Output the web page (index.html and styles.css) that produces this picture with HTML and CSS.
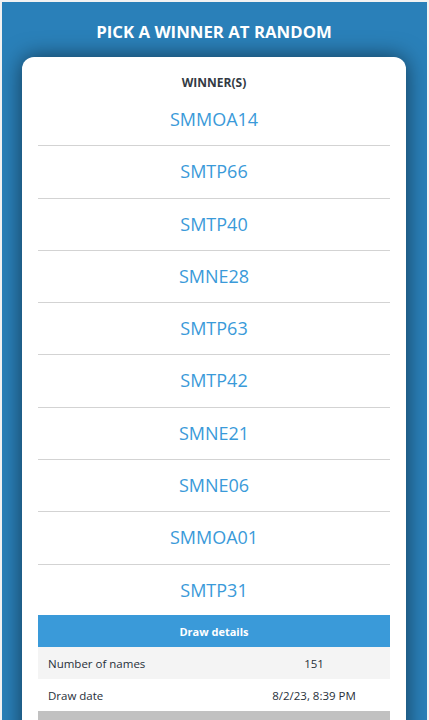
FILE: index.html
```html
<!DOCTYPE html>
<html>
<head>
<meta charset="utf-8">
<link rel="stylesheet" href="styles.css">
</head>
<body>
<div class="page">
  <h1 class="title">PICK A WINNER AT RANDOM</h1>
  <div class="card">
    <div class="heading">WINNER(S)</div>
    <ul class="winners">
      <li>SMMOA14</li>
      <li>SMTP66</li>
      <li>SMTP40</li>
      <li>SMNE28</li>
      <li>SMTP63</li>
      <li>SMTP42</li>
      <li>SMNE21</li>
      <li>SMNE06</li>
      <li>SMMOA01</li>
      <li>SMTP31</li>
    </ul>
    <table class="details">
      <thead>
        <tr><th colspan="2">Draw details</th></tr>
      </thead>
      <tbody>
        <tr class="alt"><td class="label">Number of names</td><td class="value">151</td></tr>
        <tr><td class="label">Draw date</td><td class="value">8/2/23, 8:39 PM</td></tr>
        <tr class="grey"><td></td><td></td></tr>
      </tbody>
    </table>
  </div>
</div>
</body>
</html>
```

FILE: styles.css
```css
html, body {
  margin: 0;
  padding: 0;
  height: 100%;
  overflow: hidden;
}
body {
  background: #f2f2f2;
  font-family: "Open Sans", "Noto Sans", sans-serif;
}
.page {
  margin: 2px 2px 0 2px;
  height: 100%;
  background: #2a80b9;
  padding: 0 21px 0 20px;
  overflow: hidden;
}
.title {
  margin: 0;
  padding: 20px 0 15px;
  text-align: center;
  color: #fff;
  font-size: 16.8px;
  font-weight: 700;
  line-height: 20px;
}
.card {
  background: #fff;
  border-radius: 12px;
  box-shadow: 0 0 22px rgba(0, 0, 0, 0.55);
  padding: 18px 16px 20px;
}
.heading {
  text-align: center;
  font-size: 12px;
  font-weight: 700;
  color: #333a44;
  line-height: 16px;
  margin-bottom: 3px;
}
.winners {
  list-style: none;
  margin: 0;
  padding: 0;
}
.winners li {
  height: 51.3px;
  line-height: 51px;
  text-align: center;
  color: #3a9ad9;
  font-size: 18px;
  border-bottom: 1px solid #d3d3d3;
}
.winners li:last-child {
  border-bottom: none;
  height: 50.8px;
}
.details {
  width: 100%;
  border-collapse: collapse;
  font-size: 11.5px;
  color: #27303a;
}
.details th {
  background: #3a9ad9;
  color: #fff;
  font-size: 11px;
  font-weight: 700;
  height: 32px;
  padding: 0;
}
.details td {
  height: 32px;
  padding: 0;
}
.details .label {
  width: 190px;
  padding-left: 10px;
}
.details .value {
  text-align: center;
}
.details .alt td {
  background: #f4f4f4;
}
.details .grey td {
  background: #c1c1c1;
}
```
